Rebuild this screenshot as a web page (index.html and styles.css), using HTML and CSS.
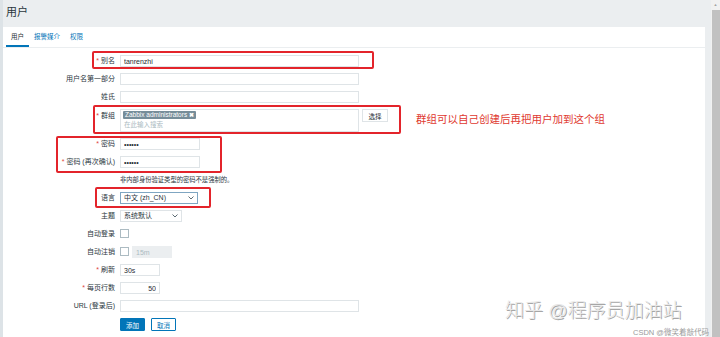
FILE: index.html
```html
<!DOCTYPE html>
<html lang="zh-CN">
<head>
    <meta charset="UTF-8">
    <title>用户</title>
    <link rel="stylesheet" href="styles.css">
</head>
<body>
    <div class="app">
        <div class="page">
            <div class="header">用户</div>
            <div class="panel">
                <div class="tabs">
                    <span class="tab active">用户</span>
                    <span class="tab">报警媒介</span>
                    <span class="tab">权限</span>
                </div>

                <div class="form">
                    <label class="req">别名</label>
                    <div class="field"><input class="input wide" type="text" value="tanrenzhi"></div>

                    <label>用户名第一部分</label>
                    <div class="field"><input class="input wide" type="text"></div>

                    <label>姓氏</label>
                    <div class="field"><input class="input wide" type="text"></div>

                    <label class="req top">群组</label>
                    <div class="field">
                        <div class="multiselect">
                            <span class="tag">Zabbix administrators <b>✖</b></span>
                            <span class="placeholder">在此输入搜索</span>
                        </div>
                        <button class="btn-plain">选择</button>
                    </div>

                    <label class="req">密码</label>
                    <div class="field"><input class="input mid" type="password" value="123456"></div>

                    <label class="req">密码 (再次确认)</label>
                    <div class="field"><input class="input mid" type="password" value="123456"></div>

                    <label></label>
                    <div class="field note">非内部身份验证类型的密码不是强制的。</div>

                    <label>语言</label>
                    <div class="field">
                        <div class="select lang">中文 (zh_CN)
                            <svg width="6" height="4" viewBox="0 0 6 4"><path d="M0.5 0.5 L3 3 L5.5 0.5" fill="none" stroke="#4b5a63" stroke-width="0.9"/></svg>
                        </div>
                    </div>

                    <label>主题</label>
                    <div class="field">
                        <div class="select theme">系统默认
                            <svg width="6" height="4" viewBox="0 0 6 4"><path d="M0.5 0.5 L3 3 L5.5 0.5" fill="none" stroke="#4b5a63" stroke-width="0.9"/></svg>
                        </div>
                    </div>

                    <label>自动登录</label>
                    <div class="field"><span class="checkbox"></span></div>

                    <label>自动注销</label>
                    <div class="field"><span class="checkbox"></span><input class="input small disabled" type="text" value="15m" disabled></div>

                    <label class="req">刷新</label>
                    <div class="field"><input class="input small" type="text" value="30s"></div>

                    <label class="req">每页行数</label>
                    <div class="field"><input class="input small num" type="text" value="50"></div>

                    <label>URL (登录后)</label>
                    <div class="field"><input class="input wide" type="text"></div>

                    <label></label>
                    <div class="field buttons">
                        <button class="btn-primary">添加</button>
                        <button class="btn-alt">取消</button>
                    </div>
                </div>
            </div>
        </div>
        <div class="scrollbar">
            <div class="arrow">▲</div>
            <div class="thumb"></div>
        </div>
    </div>

    <!-- annotations drawn over the screenshot -->
    <div class="mark mark-alias"></div>
    <div class="mark mark-group"></div>
    <div class="mark mark-pass"></div>
    <div class="mark mark-lang"></div>
    <div class="mark-text">群组可以自己创建后再把用户加到这个组</div>
    <div class="watermark">知乎 @程序员加油站</div>
    <div class="csdn">CSDN @微笑着敲代码</div>
</body>
</html>
```

FILE: styles.css
```css
body {
    margin: 0;
    background: #ebeef0;
    font-family: "Liberation Sans", "Noto Sans CJK SC", sans-serif;
    color: #2a363d;
    position: relative;
    height: 337px;
    overflow: hidden;
}
.app {
    display: flex;
    height: 337px;
}
.page {
    flex: 1;
    border-left: 3px solid #dde3e7;
}
.header {
    height: 27px;
    line-height: 25px;
    padding-left: 3px;
    font-size: 11px;
}
.panel {
    background: white;
    margin-right: 6px;
    height: 310px;
}
.tabs {
    display: flex;
    height: 20px;
    border-bottom: 1px solid #ebeef0;
    padding-left: 3px;
}
.tab {
    font-size: 6.5px;
    color: #0275b8;
    padding: 0 5px;
    line-height: 19px;
    height: 18px;
}
.tab.active {
    color: #1f2c33;
    border-bottom: 2px solid #0275b8;
}
.form {
    display: grid;
    grid-template-columns: 112px 1fr;
    column-gap: 5px;
    row-gap: 6px;
    padding-top: 7px;
}
.form label {
    font-size: 7px;
    text-align: right;
    line-height: 12px;
    white-space: nowrap;
}
.form label.top {
    line-height: 13px;
}
.req::before {
    content: "* ";
    color: #e0463b;
}
.field {
    display: flex;
    align-items: flex-start;
    gap: 3px;
    min-height: 12px;
}
.input {
    box-sizing: border-box;
    height: 12px;
    border: 1px solid #dfe4e7;
    background: white;
    font-family: inherit;
    font-size: 7px;
    color: #1f2c33;
    padding: 0 3px;
    margin: 0;
    outline: none;
}
.wide {
    width: 239px;
}
.mid {
    width: 80px;
}
.small {
    width: 40px;
}
.num {
    text-align: right;
}
.disabled {
    background: #ebeef0;
    border-color: #ebeef0;
    color: #acbbc2;
}
.multiselect {
    box-sizing: border-box;
    width: 239px;
    height: 23px;
    border: 1px solid #dfe4e7;
    padding: 1px 2px;
    display: flex;
    flex-direction: column;
    align-items: flex-start;
    gap: 1px;
}
.tag {
    background: #768d99;
    color: white;
    font-size: 6.5px;
    line-height: 8px;
    padding: 0 2px;
    border-radius: 1px;
}
.tag b {
    font-size: 6px;
}
.placeholder {
    font-size: 6.5px;
    color: #acbbc2;
    line-height: 10px;
    padding-left: 1px;
}
.btn-plain {
    box-sizing: border-box;
    height: 13px;
    width: 26px;
    padding: 0;
    border: 1px solid #dfe4e7;
    background: white;
    font-family: inherit;
    font-size: 6.5px;
    color: #1f2c33;
}
.note {
    font-size: 6.3px;
    line-height: 12px;
}
.select {
    box-sizing: border-box;
    height: 12px;
    border: 1px solid #dfe4e7;
    font-size: 7px;
    line-height: 10px;
    padding: 0 3px;
    display: flex;
    justify-content: space-between;
    align-items: center;
}
.lang {
    width: 78px;
    border-color: #7fa6c2;
}
.theme {
    width: 62px;
}
.checkbox {
    box-sizing: border-box;
    width: 9px;
    height: 9px;
    border: 1px solid #acbbc2;
    margin-top: 1px;
}
.buttons {
    gap: 6px;
}
.btn-primary, .btn-alt {
    box-sizing: border-box;
    height: 13px;
    width: 25px;
    padding: 0;
    font-family: inherit;
    font-size: 6.5px;
    border-radius: 1px;
}
.btn-primary {
    background: #0275b8;
    border: 1px solid #0275b8;
    color: white;
}
.btn-alt {
    background: white;
    border: 1px solid #0275b8;
    color: #0275b8;
}
.scrollbar {
    width: 9px;
    background: #f1f1f1;
    display: flex;
    flex-direction: column;
}
.arrow {
    height: 10px;
    font-size: 4px;
    line-height: 10px;
    text-align: center;
    color: #a3a3a3;
}
.thumb {
    flex: 1;
    background: #c1c1c1;
    margin-left: 1px;
}
.mark {
    position: absolute;
    border: 2px solid #e3242b;
    border-radius: 2px;
    box-sizing: border-box;
}
.mark-alias {
    left: 92px;
    top: 51px;
    width: 282px;
    height: 18px;
}
.mark-group {
    left: 93px;
    top: 105px;
    width: 308px;
    height: 29px;
}
.mark-pass {
    left: 56px;
    top: 136px;
    width: 166px;
    height: 37px;
}
.mark-lang {
    left: 95px;
    top: 187px;
    width: 116px;
    height: 21px;
}
.mark-text {
    position: absolute;
    left: 416px;
    top: 111px;
    font-size: 10.5px;
    color: #e0382f;
    white-space: nowrap;
}
.watermark {
    position: absolute;
    left: 505px;
    top: 295px;
    font-size: 19px;
    font-weight: 300;
    color: #e8e8e8;
    text-shadow: 1px 1px 0 #a6a6a6;
    white-space: nowrap;
}
.csdn {
    position: absolute;
    left: 633px;
    top: 326px;
    font-size: 7.5px;
    color: #9a9a9a;
    white-space: nowrap;
}
```
